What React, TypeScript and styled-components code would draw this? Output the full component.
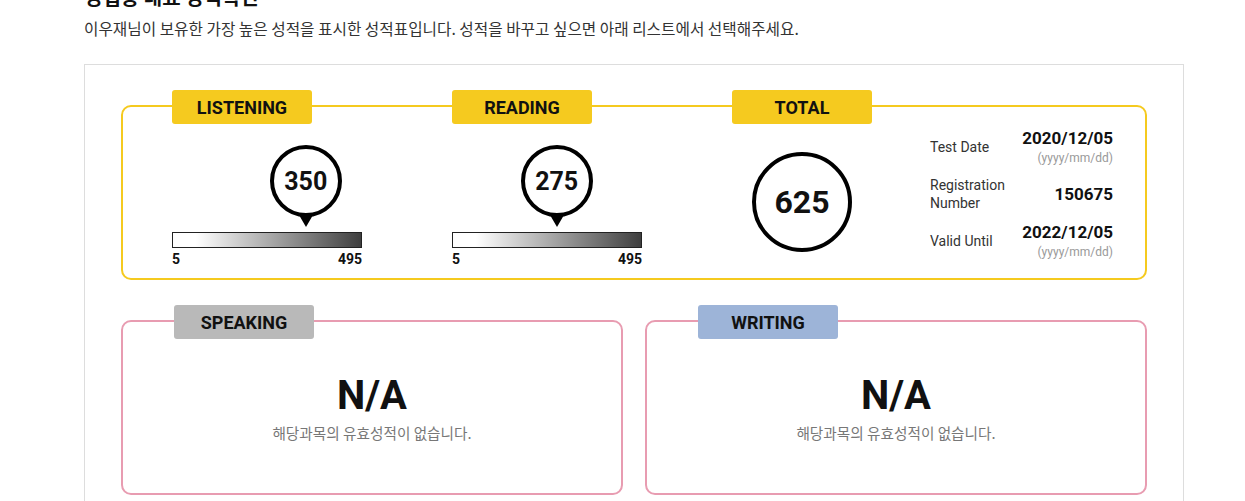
import React from "react";
import styled, { createGlobalStyle } from "styled-components";

const GlobalStyle = createGlobalStyle`
  html, body { margin: 0; padding: 0; background: #fff; }
  body { font-family: Roboto, "Noto Sans CJK KR", sans-serif; color: #111; }
  *, *::before, *::after { box-sizing: border-box; }
`;

const Wrapper = styled.div`
  width: 1100px;
  margin-left: 84px;
`;

const Title = styled.h2`
  margin: -13px 0 0;
  font-size: 20px;
  line-height: 20px;
  font-weight: 700;
  color: #111;
  font-family: "Noto Sans CJK KR", sans-serif;
`;

const Subtitle = styled.p`
  margin: 11px 0 0;
  font-size: 15.7px;
  line-height: 22px;
  color: #333;
  font-family: "Noto Sans CJK KR", sans-serif;
`;

const Box = styled.div`
  margin-top: 24px;
  border: 1px solid #ddd;
  padding: 40px 36px 40px;
`;

const ScoreCard = styled.div`
  position: relative;
  height: 175px;
  border: 2px solid #f5ca1f;
  border-radius: 10px;
  display: flex;
  padding-left: 49px;
`;

const Tab = styled.div<{ $bg: string; $left?: number }>`
  position: absolute;
  top: -17px;
  left: ${(p) => p.$left ?? 0}px;
  width: 140px;
  height: 34px;
  border-radius: 3px;
  background: ${(p) => p.$bg};
  display: flex;
  align-items: center;
  justify-content: center;
  font-size: 18px;
  font-weight: 700;
  color: #111;
`;

const Section = styled.div`
  position: relative;
  width: 280px;
  padding-top: 38px;
`;

const Gauge = styled.div`
  position: relative;
  width: 190px;
  padding-top: 87px;
`;

const Bubble = styled.div`
  position: absolute;
  top: 0;
  width: 72px;
  height: 72px;
  border: 4px solid #000;
  border-radius: 50%;
  background: #fff;
  display: flex;
  align-items: center;
  justify-content: center;
  font-size: 25px;
  font-weight: 700;
  color: #111;
  &::after {
    content: "";
    position: absolute;
    left: 50%;
    bottom: -14px;
    transform: translateX(-50%);
    border-left: 7px solid transparent;
    border-right: 7px solid transparent;
    border-top: 12px solid #000;
  }
`;

const Bar = styled.div`
  height: 16px;
  border: 1px solid #222;
  background: linear-gradient(to right, #fff 12%, #3f3f3f 100%);
`;

const Scale = styled.div`
  display: flex;
  justify-content: space-between;
  margin-top: 3px;
  font-size: 14px;
  line-height: 16px;
  font-weight: 700;
  color: #111;
`;

const TotalSection = styled.div`
  position: relative;
  width: 140px;
  padding-top: 45px;
`;

const TotalCircle = styled.div`
  width: 100px;
  height: 100px;
  margin: 0 auto;
  border: 4px solid #000;
  border-radius: 50%;
  display: flex;
  align-items: center;
  justify-content: center;
  font-size: 32px;
  font-weight: 700;
  color: #111;
`;

const Info = styled.div`
  margin-left: 58px;
  margin-top: 3px;
  width: 183px;
  align-self: center;
  display: flex;
  flex-direction: column;
  gap: 10px;
`;

const InfoRow = styled.div`
  display: flex;
  justify-content: space-between;
  align-items: center;
`;

const InfoLabel = styled.div`
  width: 80px;
  font-size: 14px;
  line-height: 18px;
  color: #333;
`;

const InfoValue = styled.div`
  text-align: right;
`;

const ValueMain = styled.div`
  font-size: 17px;
  line-height: 20px;
  font-weight: 700;
  color: #111;
`;

const ValueHint = styled.div`
  margin-top: 2px;
  font-size: 12px;
  line-height: 16px;
  color: #999;
`;

const SubjectRow = styled.div`
  display: grid;
  grid-template-columns: 1fr 1fr;
  gap: 22px;
  margin-top: 40px;
`;

const SubjectCard = styled.div`
  position: relative;
  height: 175px;
  border: 2px solid #e89cb1;
  border-radius: 10px;
  display: flex;
  flex-direction: column;
  align-items: center;
  justify-content: center;
`;

const NA = styled.div`
  font-size: 40px;
  line-height: 46px;
  font-weight: 700;
  color: #111;
`;

const NAText = styled.div`
  margin-top: 4px;
  font-size: 14.65px;
  line-height: 20px;
  color: #777;
  font-family: "Noto Sans CJK KR", sans-serif;
`;

const MIN = 5;
const MAX = 495;

function ScoreGauge({ label, score }: { label: string; score: number }) {
  const pct = ((score - MIN) / (MAX - MIN)) * 100;
  return (
    <Section>
      <Tab $bg="#f5ca1f">{label}</Tab>
      <Gauge>
        <Bubble style={{ left: `calc(${pct}% - 36px)` }}>{score}</Bubble>
        <Bar />
        <Scale>
          <span>{MIN}</span>
          <span>{MAX}</span>
        </Scale>
      </Gauge>
    </Section>
  );
}

function Subject({ label, color }: { label: string; color: string }) {
  return (
    <SubjectCard>
      <Tab $bg={color} $left={51}>{label}</Tab>
      <NA>N/A</NA>
      <NAText>해당과목의 유효성적이 없습니다.</NAText>
    </SubjectCard>
  );
}

export default function App() {
  return (
    <>
      <GlobalStyle />
      <Wrapper>
        <Title>영업용 대표 성적확인</Title>
        <Subtitle>
          이우재님이 보유한 가장 높은 성적을 표시한 성적표입니다. 성적을 바꾸고 싶으면 아래 리스트에서 선택해주세요.
        </Subtitle>
        <Box>
          <ScoreCard>
            <ScoreGauge label="LISTENING" score={350} />
            <ScoreGauge label="READING" score={275} />
            <TotalSection>
              <Tab $bg="#f5ca1f">TOTAL</Tab>
              <TotalCircle>625</TotalCircle>
            </TotalSection>
            <Info>
              <InfoRow>
                <InfoLabel>Test Date</InfoLabel>
                <InfoValue>
                  <ValueMain>2020/12/05</ValueMain>
                  <ValueHint>(yyyy/mm/dd)</ValueHint>
                </InfoValue>
              </InfoRow>
              <InfoRow>
                <InfoLabel>Registration Number</InfoLabel>
                <InfoValue>
                  <ValueMain>150675</ValueMain>
                </InfoValue>
              </InfoRow>
              <InfoRow>
                <InfoLabel>Valid Until</InfoLabel>
                <InfoValue>
                  <ValueMain>2022/12/05</ValueMain>
                  <ValueHint>(yyyy/mm/dd)</ValueHint>
                </InfoValue>
              </InfoRow>
            </Info>
          </ScoreCard>
          <SubjectRow>
            <Subject label="SPEAKING" color="#b9b9b9" />
            <Subject label="WRITING" color="#9db4d8" />
          </SubjectRow>
        </Box>
      </Wrapper>
    </>
  );
}
